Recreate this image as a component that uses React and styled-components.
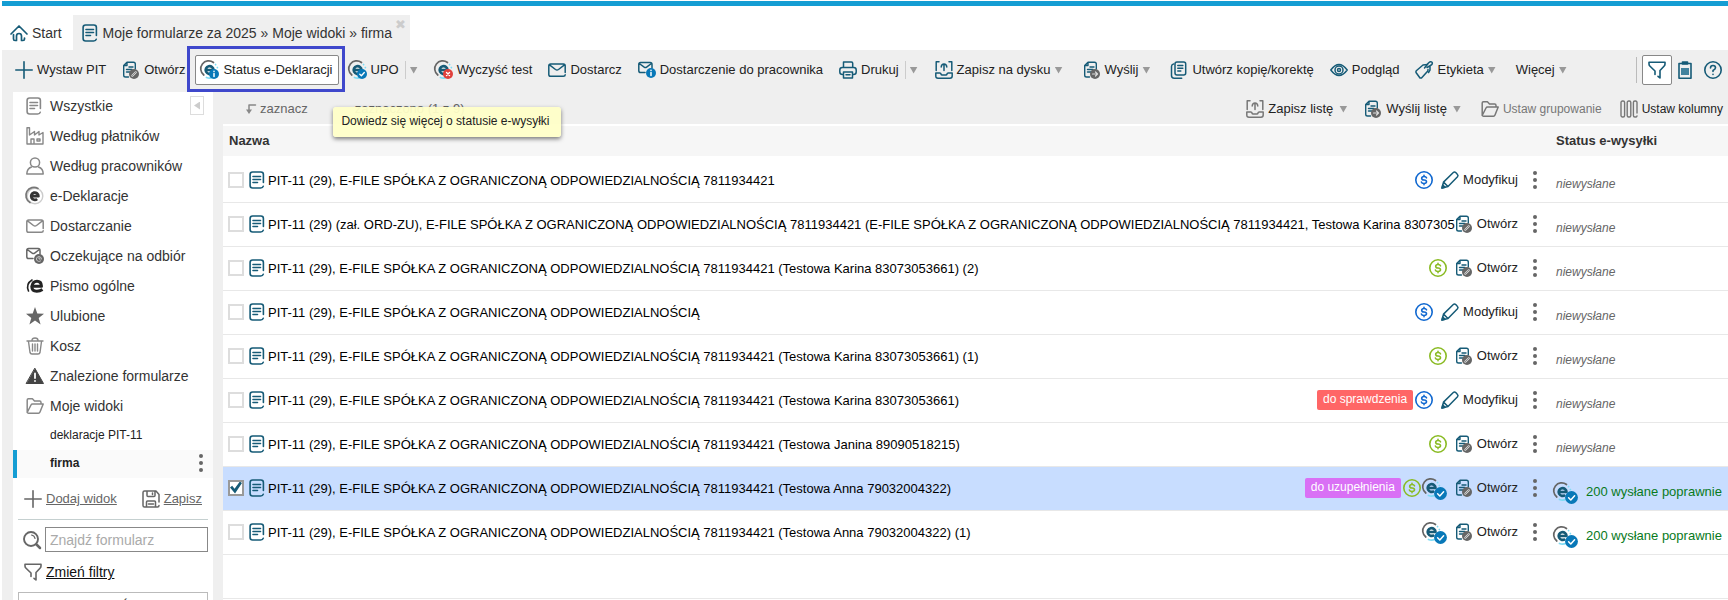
import React from "react";
import styled, { createGlobalStyle, css } from "styled-components";

const GlobalStyle = createGlobalStyle`
  * {
    box-sizing: border-box;
  }

  html, body {
    height: 100%;
    margin: 0;
    overflow: hidden;
  }

  body {
    background: #fff;
    color: #222;
    font-family: "Liberation Sans", Arial, sans-serif;
    font-size: 13px;
    line-height: 18px;
  }

  #root {
    height: 100%;
  }

  button, input {
    font: inherit;
    color: inherit;
  }

  button {
    margin: 0;
    padding: 0;
    border: 0;
    background: none;
    white-space: nowrap;
    cursor: pointer;
  }
`;

const teal = "#165b77";
const grey = "#666";

/* ---------- icons ---------- */

const Svg = styled.svg`
  display: block;
  flex: none;
  overflow: visible;
  fill: none;
  stroke: ${p => p.$color || teal};
  stroke-width: ${p => p.$stroke || 1.5};
  stroke-linecap: round;
  stroke-linejoin: round;
`;

const Icon = ({ width = 18, height = 18, color, stroke, children }) => (
  <Svg
    width={width}
    height={height}
    viewBox={`0 0 ${width} ${height}`}
    $color={color}
    $stroke={stroke}
    aria-hidden="true"
  >
    {children}
  </Svg>
);

const HomeIcon = () => (
  <Icon stroke={1.7}>
    <path d="M1 10 9 2l8 8M3.500 10.500V15q0 1.500 1.500 1.500h1.500V12q0-2.500 2.500-2.500t2.500 2.500V16.500H13q1.500 0 1.500-1.500v-1" />
  </Icon>
);

const DocIcon = ({ color = teal }) => (
  <Icon color={color} stroke={1.6}>
    <path d="M14.400 11.500V3.500q0-2.500-2.500-2.500H3.600Q1.100 1 1.100 3.500v11Q1.100 17 3.600 17h8q2.300 0 2.700-1.800M4 5.500h7.500M4 8.500h7.500M4 11.500h4.500" />
  </Icon>
);

const SheetBase = ({ color = teal }) => (
  <path
    stroke={color}
    d="M5 1.200h6.500q1.800 0 1.800 1.800v5M5 1.200 1.700 4.500v9.700q0 1.800 1.800 1.800h3M5 1.200V4.500H1.700M7 6h4M4.500 8.500H10M4.500 11H8"
  />
);

const OpenIcon = () => (
  <Icon stroke={1.4}>
    <SheetBase />
    <circle cx="12" cy="13" r="5" fill={grey} stroke="none" />
    <path d="m10.300 14.700 3.500-3.500" stroke="#ddd" strokeWidth="2" />
    <path d="m10.300 14.700 3.500-3.500" stroke={grey} strokeWidth="0.700" />
  </Icon>
);

const SendIcon = () => (
  <Icon stroke={1.4}>
    <SheetBase />
    <circle cx="12" cy="13" r="5" fill={grey} stroke="none" />
    <path d="M9.500 13h5M12.500 11l2 2-2 2" stroke="#ddd" strokeWidth="1.200" />
  </Icon>
);

const PlusIcon = ({ color = teal }) => (
  <Icon color={color} stroke={1.6}>
    <path d="M9 .8v16.400M.8 9h16.400" />
  </Icon>
);

/* the "e" of the e-declaration system, with an optional badge over it */
const EArt = ({ ink = teal, ring = grey, glow = "#7fdcf5" }) => (
  <>
    <path d="M2.800 14A7.600 7.600 0 0 1 12.500 1.500" stroke={ring} strokeWidth="1.700" />
    <path d="M5.500 16.500q3.500 1.300 6.500-.3" stroke={glow} strokeWidth="1.800" />
    <path d="M14.500 3.500l.1.100M16.300 6.500l.1.100" stroke={glow} strokeWidth="1.700" />
    <path d="M5 9h7.500a3.900 3.900 0 1 0-1.400 3" stroke={ink} strokeWidth="2.700" strokeLinecap="butt" />
  </>
);

const EStatusIcon = ({ kind }) => (
  <Icon>
    <EArt />
    <circle cx="13" cy="13" r="5" fill={kind === "x" ? "#e0403c" : "#0878b8"} stroke="none" />
    {kind === "info" && <path d="M13 12.500v3M13 10.300v.1" stroke="#fff" strokeWidth="1.500" />}
    {kind === "ok" && <path d="m10.800 13.200 1.600 1.600 2.900-3.300" stroke="#fff" strokeWidth="1.300" />}
    {kind === "x" && <path d="m11.500 11.500 3 3m0-3-3 3" stroke="#fff" strokeWidth="1.400" />}
  </Icon>
);

/* the badge hangs below the line of the other icons */
const ESentIcon = () => (
  <Icon width={24}>
    <EArt />
    <circle cx="17.500" cy="14.500" r="6.400" fill="#0878b8" stroke="none" />
    <path d="m14.600 14.800 2.200 2.200 3.800-4.200" stroke="#fff" strokeWidth="1.500" />
  </Icon>
);

const EGreyIcon = () => (
  <Icon>
    <circle cx="9" cy="9" r="7.800" stroke="#ccc" strokeWidth="1.400" />
    <path d="M4 15.500A8 8 0 0 1 12 1.400" stroke="#777" strokeWidth="1.700" />
    <path d="M5.500 9.200h6.900a3.600 3.600 0 1 0-1.300 2.800" stroke="#333" strokeWidth="2.800" strokeLinecap="butt" />
  </Icon>
);

const EBlackIcon = () => (
  <Icon>
    <path d="M2.500 14Q-.5 7 6 3" stroke="#222" strokeWidth="1.600" />
    <path d="M6 9.300h9.500Q15.300 4.300 11 4.300T5.800 9.500q0 4.700 5 4.700 3.200 0 5.700-1.700" stroke="#222" strokeWidth="3" strokeLinecap="butt" />
  </Icon>
);

const MailIcon = ({ color = teal }) => (
  <Icon color={color}>
    <path d="M17.200 11.500V4.800q0-1.800-1.800-1.800H2.600Q.8 3 .8 4.800v8.700q0 1.800 1.800 1.800h12.800q1.800 0 1.800-1.500M1.200 3.600 7.500 8.500q1.500 1 3 0l6.300-4.900" />
  </Icon>
);

const MailBadgeIcon = ({ color = teal, badge = "#0878b8", children }) => (
  <Icon color={color}>
    <path d="M14 7V3.500Q14 1.500 12.200 1.500H2.600Q.8 1.500.8 3.300v6.400q0 1.800 1.800 1.800H7M1.200 2.500l5 3.700q1.200.8 2.400 0l4.800-3.700" />
    <circle cx="13" cy="12" r="5" fill={badge} stroke="none" />
    {children}
  </Icon>
);

const PrintIcon = () => (
  <Icon>
    <path d="M4.500 6.500V1h8q1.200 0 1.200 1.200v4.300M3.500 13.500q-2.700 0-2.700-2.500V9q0-2.500 2.500-2.500h11.400q2.500 0 2.500 2.500v2q0 2.500-2.700 2.500M4.500 11h9v6h-9zM7 13.800h4" />
  </Icon>
);

const SaveDiskIcon = ({ color = teal }) => (
  <Icon color={color}>
    <path d="M4 .8H1.200v8.700M14 .8h2.800v8.700M.8 12h4q1 0 1.200 1 .2 1 1.200 1h3.600q1 0 1.200-1 .2-1 1.200-1h4v3q0 2.200-2.200 2.200H3Q.8 17.200.8 15V12M9 9.500V3.500M6.200 6Q6.500 3 9 3t2.800 3" />
  </Icon>
);

const CopyIcon = () => (
  <Icon>
    <path d="M3.500 3Q1.500 3.500 1.500 5.500v9q0 2.700 2.700 2.700h7.500M7 1h6.700q2 0 2 2v9q0 2-2 2H7q-2 0-2-2V3q0-2 2-2M7.800 4.500h5M7.800 7.200h5M7.800 10h3" />
  </Icon>
);

const EyeIcon = () => (
  <Icon>
    <path d="M.8 9Q9-2 17.200 9 9 20 .8 9" />
    <circle cx="9" cy="9" r="4" />
    <circle cx="9" cy="9" r="1.500" />
  </Icon>
);

const TagIcon = () => (
  <Icon>
    <path d="m13 8.500-.2 1.500L6.500 17H5l-4-5.500q-.3-1 .3-1.800L8 4l4.500-.5" />
    <path d="m9.500 7 3.500-4.500Q15.500-.2 17 1.200q1.200 1.800-1.500 3.300L12 6.500M15 5v4l-1.500 2.500" />
  </Icon>
);

const FilterIcon = ({ color = teal }) => (
  <Icon color={color} stroke={1.6}>
    <path d="M1 3V1.200h16V3q0 1.200-.8 2L12 9.500V17l-2-1.700M1 3q0 1.200.8 2L7 10v3.500" />
  </Icon>
);

const ClipboardIcon = () => (
  <Icon width={14} stroke={1.6}>
    <path d="M1 2.500h12v14.700H1z" />
    <path d="M4.500 1h5v2h-5z" fill={teal} />
    <path d="M3 7h8v7H3z" fill="#42829d" stroke="none" />
  </Icon>
);

const HelpIcon = () => (
  <Icon stroke={1.6}>
    <circle cx="9" cy="9" r="8.200" />
    <path d="M6.500 7Q6.500 4.500 9 4.500t2.500 2.300Q11.500 8.200 9 9.500v1M9 13.300v.1" />
  </Icon>
);

const FactoryIcon = () => (
  <Icon color="#888" stroke={1.4}>
    <path d="M1 17V.8h2.500V8l5-3.500V8l4.500-3.500V8l4-2.500V17zM5 16v-4h3v4M11 12h3v2h-3z" />
  </Icon>
);

const PersonIcon = () => (
  <Icon color="#888">
    <circle cx="9" cy="5.500" r="4.600" />
    <path d="M5.500 10Q1 11.500.8 17h16.400q0-5.500-4.700-7" />
  </Icon>
);

const StarIcon = () => (
  <Icon>
    <path d="m9 0 2.300 6.500 6.700.200-5.300 4.200 1.900 6.600L9 13.600l-5.600 3.900 1.900-6.600L0 6.700l6.700-.2z" fill={grey} stroke="none" />
  </Icon>
);

const TrashIcon = () => (
  <Icon color="#888" stroke={1.4}>
    <path d="M1 4h16M6 3.500Q6 1 9 1t3 2.500M2.500 4.500 4 15.500Q4.300 17 6 17h6q1.700 0 2-1.500l1.500-11M6.500 7v7M9 7v7M11.500 7v7" />
  </Icon>
);

const WarningIcon = () => (
  <Icon>
    <path d="M9 1.500 17.500 16.500H.5z" fill="#444" stroke="#444" strokeWidth="1" />
    <path d="M9 6.500v4.500M9 14v.1" stroke="#fff" strokeWidth="1.800" />
  </Icon>
);

const FolderIcon = ({ color = "#888" }) => (
  <Icon color={color}>
    <path d="M1.200 15.500V3q0-1.200 1.200-1.200h4L8.500 4h5.200q1.300 0 1.300 1.500V7M1.200 15.500 5 8q.5-1 1.500-1h10.700L14 15q-.5 1.200-1.500 1.200H2.500q-1 0-1.300-.7" />
  </Icon>
);

const FloppyIcon = () => (
  <Icon color={grey}>
    <path d="M17 12V4.500L14 1H2.500Q1 1 1 2.500v13Q1 17 2.500 17h13q1.500 0 1.500-1.500M5 1v4.500q0 1 1 1h6q1 0 1-1V1M10.500 3v1.500M4.500 17v-5q0-1 1-1h7q1 0 1 1v5M6.500 14h5" />
  </Icon>
);

const SearchIcon = () => (
  <Icon color={grey} stroke={1.9}>
    <circle cx="8" cy="8" r="7" />
    <path d="m13.500 13.500 3.500 3.500" strokeWidth="2.500" />
    <path d="M8.500 4q3 .3 3.500 3.500" strokeWidth="1.200" />
  </Icon>
);

const ColumnsIcon = () => (
  <Icon color="#777" stroke={1.4}>
    <rect x="1" y="1" width="3.600" height="16" rx="1.500" />
    <rect x="7.200" y="1" width="3.600" height="16" rx="1.500" />
    <path d="M17 13V2.500Q17 1 15.500 1h-.6q-1.500 0-1.500 1.500v13q0 1.500 1.500 1.500h.6q1.200 0 1.500-1" />
  </Icon>
);

const PencilIcon = () => (
  <Icon>
    <path d="m.9 17.100 1.600-6L12.300 1.500q1.200-1 2.700.3l1.300 1.400q1.300 1.300.2 2.600L7 15.500zM2.500 11.100l4.500 4.400" />
    <path d="m1 17 .8-3L4 16.200z" fill={teal} />
  </Icon>
);

const CoinIcon = ({ color }) => (
  <Icon color={color} stroke={1.6}>
    <circle cx="9" cy="9" r="8.200" />
    <path d="M11.500 6.800Q11 5.500 9 5.500q-2.300 0-2.300 1.700T9 9q2.500.2 2.500 1.800T9 12.500q-2.200 0-2.600-1.400M9 4.200v1.300M9 12.500v1.300" />
  </Icon>
);

const MarkIcon = () => (
  <Icon width={10} height={12} color="#888">
    <path d="M9.500 2H3v6" />
    <path d="M0 6.500h6L3 11z" fill="#888" stroke="none" />
  </Icon>
);

const DotsIcon = () => (
  <Icon>
    <g fill={grey} stroke="none">
      <circle cx="9" cy="2" r="2" />
      <circle cx="9" cy="9" r="2" />
      <circle cx="9" cy="16" r="2" />
    </g>
  </Icon>
);

/* ---------- page frame ---------- */

const Page = styled.div`
  display: flex;
  flex-direction: column;
  height: 100%;
  padding: 1px 0 0 2px;
`;

const TopStripe = styled.div`
  flex: none;
  height: 5px;
  background: #149dd3;
`;

const Tabs = styled.nav`
  display: flex;
  flex: none;
  height: 44px;
  padding-top: 9px;
  font-size: 14px;
`;

const Tab = styled.a`
  display: flex;
  align-items: center;
  gap: 4px;
  padding: 0 11px 0 8px;
  color: #333;
  text-decoration: none;
  white-space: nowrap;

  ${p =>
    p.$active &&
    css`
      gap: 3px;
      padding: 0 0 0 9px;
    `}
`;

const ActiveTab = styled.div`
  display: flex;
  align-items: flex-start;
  padding-right: 4px;
  background: #efefef;

  ${Tab} {
    align-self: stretch;
  }
`;

const CloseButton = styled.button`
  margin-top: 1px;
  padding-left: 3px;
  color: #ccc;
  font-family: "DejaVu Sans", sans-serif;
  font-size: 13px;
`;

/* ---------- toolbars ---------- */

const Toolbar = styled.div`
  display: flex;
  align-items: center;
  flex: none;
  height: 42px;
  padding: 0 0 2px 7px;
  background: #efefef;
`;

const Group = styled.div`
  position: relative;
  display: flex;
  align-items: center;
  flex: none;
  margin-right: ${p => (p.$menu ? 8 : 4)}px;
`;

const ToolButton = styled.button`
  display: flex;
  align-items: center;
  gap: 4px;
  height: 30px;
  padding: 0 5px;
  border: 1px solid ${p => (p.$active ? "#888" : "transparent")};
  border-radius: 2px;
  background: ${p => (p.$active ? "#fff" : "transparent")};
`;

const Caret = styled.span`
  width: 8px;
  height: 7px;
  background: #999;
  clip-path: polygon(0 0, 100% 0, 50% 100%);
`;

const SplitButton = styled.button`
  display: flex;
  align-items: center;
  height: 18px;
  padding: 0 3px 0 4px;
  border-left: 1px solid #ccc;
`;

/* frame that points the reader to one command */
const Highlight = styled.span`
  position: absolute;
  inset: -9px -6px -7px -8px;
  border: 3px solid #3f48cc;
  pointer-events: none;
`;

const Tip = styled.div`
  position: absolute;
  z-index: 2;
  top: 52px;
  left: 138px;
  height: 30px;
  padding: 5px 12px 5px 8px;
  border-radius: 3px;
  background: rgba(255, 255, 200, 0.94);
  box-shadow: 0 2px 4px rgba(0, 0, 0, 0.5);
  font-size: 12px;
  white-space: nowrap;
`;

const Spacer = styled.span`
  flex: 1;
`;

const Rule = styled.span`
  width: 1px;
  height: 26px;
  margin-right: 5px;
  background: #bbb;
`;

/* ---------- sidebar ---------- */

const Body = styled.div`
  display: flex;
  flex: 1;
  gap: 10px;
  min-height: 0;
  padding-left: 11px;
  background: #efefef;
`;

const Sidebar = styled.aside`
  flex: none;
  width: 200px;
  overflow: hidden;
  background: #fff;
`;

const ViewList = styled.ul`
  position: relative;
  margin: 0;
  padding: 0;
  list-style: none;
`;

const ViewLink = styled.a`
  display: flex;
  align-items: center;
  gap: 6px;
  height: 30px;
  padding: 0 0 2px 13px;
  color: #333;
  font-size: 14px;
  text-decoration: none;
  white-space: nowrap;
`;

const SubView = styled.li`
  display: flex;
  align-items: center;
  justify-content: space-between;
  height: 28px;
  padding-right: 3px;
  padding-bottom: 2px;
  padding-left: ${p => (p.$current ? 33 : 37)}px;
  border-left: ${p => (p.$current ? "4px solid #149dd3" : "0")};
  background: ${p => (p.$current ? "#fafafa" : "#fff")};
  font-size: 12px;
  font-weight: ${p => (p.$current ? "bold" : "normal")};

  a {
    color: #222;
    text-decoration: none;
  }
`;

const Collapse = styled.button`
  position: absolute;
  top: 4px;
  right: 9px;
  display: grid;
  place-items: center;
  width: 14px;
  height: 19px;
  border: 1px solid #ddd;
  background: #fff;

  &::before {
    content: "";
    width: 6px;
    height: 8px;
    background: #ccc;
    clip-path: polygon(100% 0, 100% 100%, 0 50%);
  }
`;

const ViewActions = styled.div`
  display: flex;
  justify-content: space-between;
  margin: 0 5px;
  padding: 12px 6px 11px;
  border-bottom: 1px solid #c5d0d0;
`;

const LinkButton = styled.button`
  display: flex;
  align-items: center;
  gap: 4px;
  color: ${p => (p.$dark ? "#111" : grey)};
  font-size: ${p => (p.$dark ? 14 : 13)}px;
  text-decoration: underline;
`;

const SearchRow = styled.form`
  display: flex;
  align-items: center;
  gap: 4px;
  margin: 7px 5px 11px 10px;
`;

const SearchInput = styled.input`
  flex: 1;
  min-width: 0;
  height: 25px;
  padding: 0 4px;
  border: 1px solid #888;
  font-size: 14px;

  &::placeholder {
    color: #aaa;
    opacity: 1;
  }
`;

const FilterRow = styled.div`
  padding: 0 11px 11px;
`;

const WideButton = styled.button`
  display: block;
  width: 190px;
  height: 28px;
  margin-left: 5px;
  border: 1px solid #bbb;
  color: #333;
`;

/* ---------- list ---------- */

const Main = styled.main`
  flex: 1;
  min-width: 0;
  background: #fff;
`;

const ListBar = styled.div`
  display: flex;
  align-items: center;
  height: 34px;
  padding: 2px 0 0 23px;
  border-bottom: 2px solid #fff;
  background: #efefef;
  color: ${grey};
`;

const MarkButton = styled.button`
  display: flex;
  align-items: center;
  gap: 4px;
  margin-right: 47px;
`;

const ListTool = styled.button`
  display: flex;
  align-items: center;
  gap: 4px;
  margin-left: ${p => (p.$menu ? 15 : 18)}px;
  color: ${p => (p.$muted ? "#777" : "#222")};
  font-size: ${p => (p.$menu ? 13 : 12)}px;

  &:last-child {
    margin-right: 5px;
  }

  ${Caret} {
    margin: 0 2px;
  }
`;

const Table = styled.table`
  width: 100%;
  border-collapse: separate;
  border-spacing: 0;
  table-layout: fixed;
`;

const Th = styled.th`
  width: ${p => p.$width || "auto"};
  height: 33px;
  padding: 0 6px;
  border-bottom: 3px solid #fff;
  background: #f6f6f6;
  color: #333;
  text-align: left;
`;

const Row = styled.tr`
  background: ${p => (p.$selected ? "#c8ddff" : "#fff")};
`;

const Cell = styled.td`
  height: 44px;
  padding: 0 6px 2px 5px;
  border-bottom: 1px solid #e8e8e8;
`;

const StatusCell = styled(Cell)`
  padding: 7px 0 0 4px;
`;

const FormLine = styled.div`
  display: flex;
  align-items: center;
  height: 22px;
`;

const Check = styled.input`
  flex: none;
  appearance: none;
  display: grid;
  width: 16px;
  height: 16px;
  margin: 0 5px 0 0;
  border: 2px solid #ddd;
  background: #fff;

  &:checked {
    border-color: #999;
  }

  &:checked::before {
    content: "";
    background: ${teal};
    clip-path: polygon(0 50%, 18% 36%, 38% 60%, 82% 0, 100% 12%, 42% 100%);
  }
`;

const FormName = styled.label`
  flex: 1;
  min-width: 0;
  margin: 2px 0 0 1px;
  overflow: hidden;
  color: #000;
  white-space: nowrap;
`;

const Marks = styled.div`
  display: flex;
  align-items: center;
  flex: none;
  gap: 2px;
  margin: 0 8px;
`;

const Label = styled.span`
  height: 20px;
  padding: 0 6px;
  border-radius: 2px;
  background: ${p => p.$color};
  color: #fff;
  font-size: 12px;
`;

const RowButton = styled.button`
  display: flex;
  align-items: center;
  flex: none;
  gap: 4px;

  & + & {
    margin-left: 8px;
  }
`;

const NotSent = styled.em`
  padding-left: 2px;
  color: ${grey};
  font-size: 12px;
`;

const Sent = styled.span`
  display: flex;
  align-items: center;
  gap: 8px;
  color: #087a1c;
  white-space: nowrap;
`;

/* ---------- data ---------- */

const tools = [
  { text: "Wystaw PIT", icon: <PlusIcon /> },
  { text: "Otwórz", icon: <OpenIcon /> },
  {
    text: "Status e-Deklaracji",
    icon: <EStatusIcon kind="info" />,
    tip: "Dowiedz się więcej o statusie e-wysyłki"
  },
  { text: "UPO", icon: <EStatusIcon kind="ok" />, split: true },
  { text: "Wyczyść test", icon: <EStatusIcon kind="x" /> },
  { text: "Dostarcz", icon: <MailIcon /> },
  {
    text: "Dostarczenie do pracownika",
    icon: (
      <MailBadgeIcon>
        <path d="M13 11.500v3M13 9.300v.1" stroke="#fff" strokeWidth="1.500" />
      </MailBadgeIcon>
    )
  },
  { text: "Drukuj", icon: <PrintIcon />, split: true },
  { text: "Zapisz na dysku", icon: <SaveDiskIcon />, menu: true },
  { text: "Wyślij", icon: <SendIcon />, menu: true },
  { text: "Utwórz kopię/korektę", icon: <CopyIcon /> },
  { text: "Podgląd", icon: <EyeIcon /> },
  { text: "Etykieta", icon: <TagIcon />, menu: true },
  { text: "Więcej", menu: true }
];

const views = [
  { text: "Wszystkie", icon: <DocIcon color="#888" /> },
  { text: "Według płatników", icon: <FactoryIcon /> },
  { text: "Według pracowników", icon: <PersonIcon /> },
  { text: "e-Deklaracje", icon: <EGreyIcon /> },
  { text: "Dostarczanie", icon: <MailIcon color="#888" /> },
  {
    text: "Oczekujące na odbiór",
    icon: (
      <MailBadgeIcon color={grey} badge={grey}>
        <path d="M15.500 12a2.500 2.500 0 1 0-1 2M13 10.500V12h1.200" stroke="#ccc" strokeWidth="1" />
      </MailBadgeIcon>
    )
  },
  { text: "Pismo ogólne", icon: <EBlackIcon /> },
  { text: "Ulubione", icon: <StarIcon /> },
  { text: "Kosz", icon: <TrashIcon /> },
  { text: "Znalezione formularze", icon: <WarningIcon /> },
  { text: "Moje widoki", icon: <FolderIcon /> }
];

const company = "E-FILE SPÓŁKA Z OGRANICZONĄ ODPOWIEDZIALNOŚCIĄ";

const forms = [
  { name: `PIT-11 (29), ${company} 7811934421`, coin: "blue", edit: true },
  {
    name: `PIT-11 (29) (zał. ORD-ZU), ${company} 7811934421 (${company} 7811934421, Testowa Karina 8307305`
  },
  { name: `PIT-11 (29), ${company} 7811934421 (Testowa Karina 83073053661) (2)`, coin: "green" },
  { name: `PIT-11 (29), ${company}`, coin: "blue", edit: true },
  { name: `PIT-11 (29), ${company} 7811934421 (Testowa Karina 83073053661) (1)`, coin: "green" },
  {
    name: `PIT-11 (29), ${company} 7811934421 (Testowa Karina 83073053661)`,
    coin: "blue",
    edit: true,
    label: "do sprawdzenia",
    labelColor: "#ff6666"
  },
  { name: `PIT-11 (29), ${company} 7811934421 (Testowa Janina 89090518215)`, coin: "green" },
  {
    name: `PIT-11 (29), ${company} 7811934421 (Testowa Anna 79032004322)`,
    coin: "green",
    label: "do uzupełnienia",
    labelColor: "#d970f5",
    sent: true,
    selected: true
  },
  { name: `PIT-11 (29), ${company} 7811934421 (Testowa Anna 79032004322) (1)`, sent: true }
];

const coinColors = { blue: "#1068d0", green: "#8abb24" };

const Tool = ({ text, icon, menu, split, tip }) => (
  <Group $menu={menu || split}>
    <ToolButton $active={Boolean(tip)} aria-describedby={tip ? "tool-tip" : undefined}>
      {icon}
      {text}
      {menu && <Caret />}
    </ToolButton>
    {split && (
      <SplitButton aria-label={`${text} – więcej opcji`}>
        <Caret />
      </SplitButton>
    )}
    {tip && (
      <>
        <Highlight />
        <Tip role="tooltip" id="tool-tip">
          {tip}
        </Tip>
      </>
    )}
  </Group>
);

const FormRow = ({ form, id }) => (
  <Row $selected={form.selected}>
    <Cell>
      <FormLine>
        <Check type="checkbox" id={id} defaultChecked={form.selected} />
        <DocIcon />
        <FormName htmlFor={id}>{form.name}</FormName>
        {(form.label || form.coin || form.sent) && (
          <Marks>
            {form.label && <Label $color={form.labelColor}>{form.label}</Label>}
            {form.coin && <CoinIcon color={coinColors[form.coin]} />}
            {form.sent && <ESentIcon />}
          </Marks>
        )}
        <RowButton>
          {form.edit ? <PencilIcon /> : <OpenIcon />}
          {form.edit ? "Modyfikuj" : "Otwórz"}
        </RowButton>
        <RowButton aria-label="Więcej">
          <DotsIcon />
        </RowButton>
      </FormLine>
    </Cell>
    <StatusCell>
      {form.sent ? (
        <Sent>
          <ESentIcon />
          200 wysłane poprawnie
        </Sent>
      ) : (
        <NotSent>niewysłane</NotSent>
      )}
    </StatusCell>
  </Row>
);

export default function App() {
  return (
    <Page>
      <GlobalStyle />
      <TopStripe />
      <Tabs>
        <Tab href="#start">
          <HomeIcon />
          Start
        </Tab>
        <ActiveTab>
          <Tab href="#firma" $active>
            <DocIcon />
            Moje formularze za 2025 » Moje widoki » firma
          </Tab>
          <CloseButton aria-label="Zamknij">✖</CloseButton>
        </ActiveTab>
      </Tabs>
      <Toolbar>
        {tools.map(tool => (
          <Tool key={tool.text} {...tool} />
        ))}
        <Spacer />
        <Rule />
        <ToolButton $active aria-label="Filtry">
          <FilterIcon />
        </ToolButton>
        <ToolButton aria-label="Schowek">
          <ClipboardIcon />
        </ToolButton>
        <ToolButton aria-label="Pomoc">
          <HelpIcon />
        </ToolButton>
      </Toolbar>
      <Body>
        <Sidebar>
          <ViewList>
            {views.map(view => (
              <li key={view.text}>
                <ViewLink href="#widok">
                  {view.icon}
                  {view.text}
                </ViewLink>
              </li>
            ))}
            <SubView>
              <a href="#pit-11">deklaracje PIT-11</a>
            </SubView>
            <SubView $current>
              <a href="#firma">firma</a>
              <button aria-label="Opcje widoku">
                <DotsIcon />
              </button>
            </SubView>
            <Collapse aria-label="Zwiń panel" />
          </ViewList>
          <ViewActions>
            <LinkButton>
              <PlusIcon color={grey} />
              Dodaj widok
            </LinkButton>
            <LinkButton>
              <FloppyIcon />
              Zapisz
            </LinkButton>
          </ViewActions>
          <SearchRow>
            <SearchIcon />
            <SearchInput aria-label="Znajdź formularz" placeholder="Znajdź formularz" />
          </SearchRow>
          <FilterRow>
            <LinkButton $dark>
              <FilterIcon color={grey} />
              Zmień filtry
            </LinkButton>
          </FilterRow>
          <WideButton>ZWIŃ</WideButton>
        </Sidebar>
        <Main>
          <ListBar>
            <MarkButton>
              <MarkIcon />
              zaznacz
            </MarkButton>
            zaznaczono (1 z 9)
            <Spacer />
            <ListTool $menu>
              <SaveDiskIcon color="#777" />
              Zapisz listę
              <Caret />
            </ListTool>
            <ListTool $menu>
              <SendIcon />
              Wyślij listę
              <Caret />
            </ListTool>
            <ListTool $muted>
              <FolderIcon color="#777" />
              Ustaw grupowanie
            </ListTool>
            <ListTool>
              <ColumnsIcon />
              Ustaw kolumny
            </ListTool>
          </ListBar>
          <Table>
            <thead>
              <tr>
                <Th>Nazwa</Th>
                <Th $width="178px">Status e-wysyłki</Th>
              </tr>
            </thead>
            <tbody>
              {forms.map((form, i) => (
                <FormRow key={form.name} form={form} id={`form-${i}`} />
              ))}
              <Row>
                <Cell colSpan={2} />
              </Row>
            </tbody>
          </Table>
        </Main>
      </Body>
    </Page>
  );
}
